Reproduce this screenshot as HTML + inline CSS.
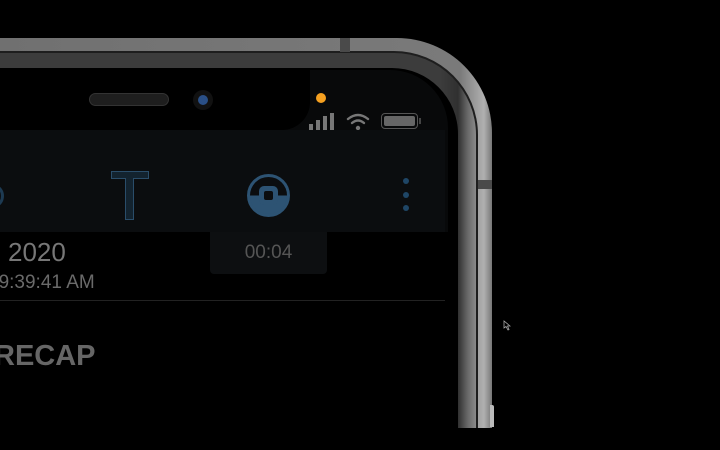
<!DOCTYPE html>
<html><head><style>
*{margin:0;padding:0;box-sizing:border-box}
html,body{width:720px;height:450px;overflow:hidden;background:#000}
body{font-family:"Liberation Sans",sans-serif}
#w{position:relative;width:720px;height:450px;overflow:hidden}
.abs{position:absolute}
.outer{left:-100px;top:38px;width:592px;height:500px;border-radius:95px;background:linear-gradient(90deg,#6e6e6e 0,#7a7a7a 560px,#b0b0b0 584px,#777 592px);}
.inner1{left:-100px;top:51px;width:578px;height:500px;border-radius:84px;background:#1e1e1e;}
.inner2{left:-100px;top:53px;width:576px;height:500px;border-radius:82px;background:linear-gradient(90deg,#3c3c3c 0,#3c3c3c 540px,#303030 558px,#6a6a6a 568px,#8a8a8a 576px);}
.inner3{left:-100px;top:68px;width:558px;height:500px;border-radius:66px;background:#000;}
.screen{left:-100px;top:70px;width:548px;height:500px;border-radius:58px;background:#08090a;overflow:hidden}
</style></head><body><div id="w">
<div class="abs outer"></div>
<div class="abs inner1"></div>
<div class="abs inner2"></div>
<div class="abs inner3"></div>
<div class="abs" style="left:340px;top:38px;width:10px;height:14px;background:#4a4a4a"></div>
<div class="abs" style="left:478px;top:180px;width:14px;height:9px;background:#4a4a4a"></div>
<div class="abs screen">
  <div class="abs" style="left:0;top:0;width:410px;height:60px;background:#000;border-bottom-right-radius:28px"></div>
  <div class="abs" style="left:0;top:162px;width:600px;height:340px;background:#000"></div>
</div>
<div class="abs" style="left:89px;top:93px;width:80px;height:13px;border-radius:7px;background:#1e1e1e;border:1px solid #333"></div>
<div class="abs" style="left:193px;top:90px;width:20px;height:20px;border-radius:50%;background:#111;"></div>
<div class="abs" style="left:198px;top:95px;width:10px;height:10px;border-radius:50%;background:#2a4f86;"></div>
<div class="abs" style="left:316px;top:93px;width:10px;height:10px;border-radius:50%;background:#f5a020"></div>
<div class="abs" style="left:309px;top:124px;width:4px;height:6px;background:#777"></div>
<div class="abs" style="left:316px;top:120px;width:4px;height:10px;background:#777"></div>
<div class="abs" style="left:323px;top:116px;width:4px;height:14px;background:#777"></div>
<div class="abs" style="left:330px;top:113px;width:4px;height:17px;background:#777"></div>
<svg class="abs" style="left:346px;top:112px" width="24" height="20" viewBox="0 0 24 20"><g fill="none" stroke="#777" stroke-width="2.4" stroke-linecap="round"><path d="M2 7 Q12 -1 22 7"/><path d="M6 11 Q12 6 18 11"/></g><circle cx="12" cy="16" r="2.2" fill="#777"/></svg>
<div class="abs" style="left:381px;top:113px;width:37px;height:16px;border-radius:4px;border:1.5px solid #555;padding:2px"><div style="width:100%;height:100%;background:#666;border-radius:2px"></div></div>
<div class="abs" style="left:419px;top:118px;width:2px;height:6px;background:#444"></div>
<div class="abs" style="left:0;top:130px;width:445px;height:102px;background:#0b0d0f"></div>
<div class="abs" style="left:-14px;top:185px;width:18px;height:22px;border:3px solid #1d3a52;border-radius:50%"></div>
<div class="abs" style="left:111px;top:171px;width:38px;height:8px;background:#13232f;border:1px solid #2a4d6a"></div>
<div class="abs" style="left:125px;top:178px;width:9px;height:42px;background:#13232f;border:1px solid #2a4d6a;border-top:none"></div>
<div class="abs" style="left:247px;top:174px;width:43px;height:43px;border-radius:50%;background:linear-gradient(#0b0d0f 50%,#2d5373 50%);border:3px solid #2d5373"></div>
<div class="abs" style="left:259px;top:186px;width:19px;height:19px;border-radius:5px;background:#2d5373"></div>
<div class="abs" style="left:264px;top:191px;width:9px;height:9px;border-radius:2px;background:#0b0d0f"></div>
<div class="abs" style="left:403px;top:178px;width:6px;height:6px;border-radius:50%;background:#1f4666"></div>
<div class="abs" style="left:403px;top:192px;width:6px;height:6px;border-radius:50%;background:#1f4666"></div>
<div class="abs" style="left:403px;top:205px;width:6px;height:6px;border-radius:50%;background:#1f4666"></div>
<div class="abs" style="left:210px;top:232px;width:117px;height:42px;background:#0d0f11;border-radius:0 0 4px 4px"></div>
<div class="abs" style="left:210px;top:242px;width:117px;text-align:center;color:#555;font-size:19px">00:04</div>
<div class="abs" style="left:8px;top:237px;color:#777;font-size:26px">2020</div>
<div class="abs" style="left:-12px;top:272px;color:#6a6a6a;font-size:19px">09:39:41 AM</div>
<div class="abs" style="left:0;top:300px;width:445px;height:1px;background:#222"></div>
<div class="abs" style="left:-6px;top:340px;color:#666;font-size:29px;font-weight:bold">RECAP</div>
<div class="abs" style="left:490px;top:405px;width:4px;height:22px;background:#bbb;border-radius:0 2px 0 0"></div>
<div class="abs" style="left:0;top:428px;width:720px;height:22px;background:#000"></div>
<svg class="abs" style="left:503px;top:320px" width="8" height="11"><path d="M1 1 L1 8 L3 6.5 L5 10 L6 9.5 L4.5 6 L7 6 Z" fill="#000" stroke="#aaa" stroke-width="0.8"/></svg>
</div></body></html>
